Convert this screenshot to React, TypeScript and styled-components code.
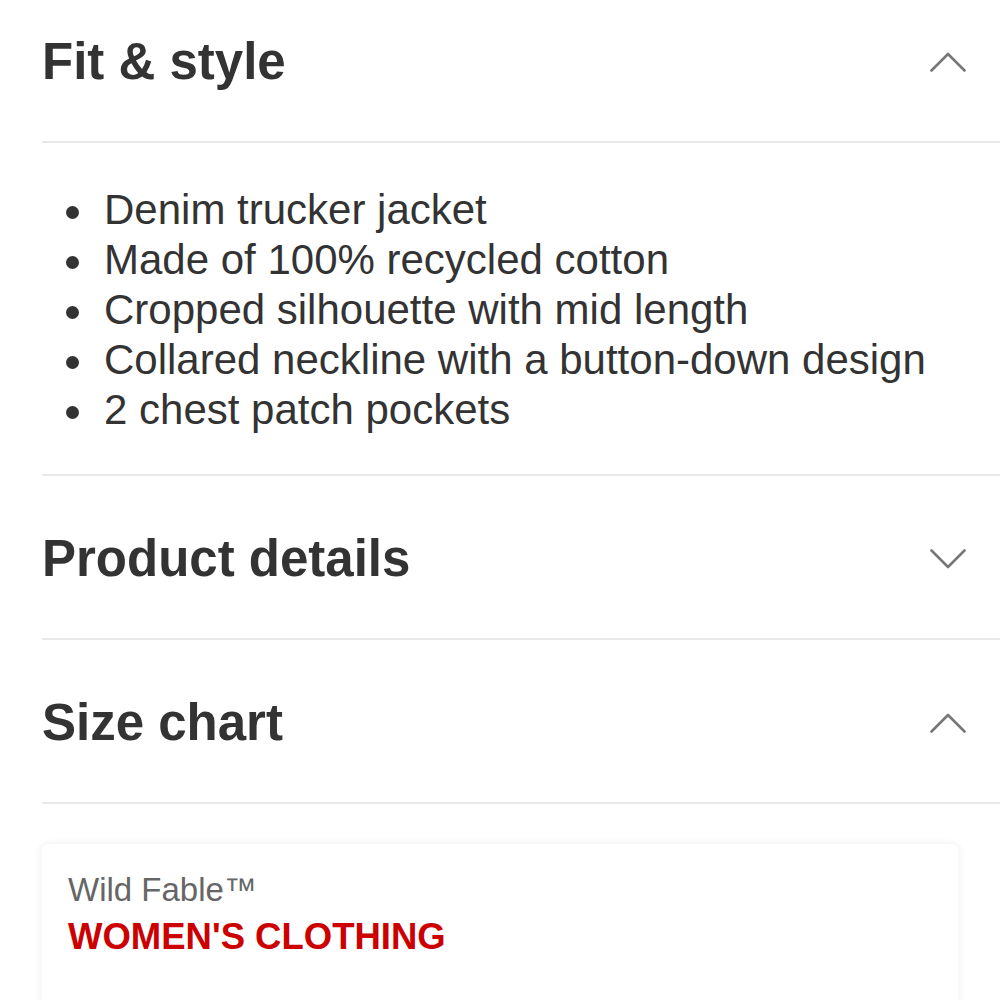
import React, { useState } from 'react'
import styled, { createGlobalStyle } from 'styled-components'

const GlobalStyle = createGlobalStyle`
  html, body {
    margin: 0;
    padding: 0;
    background: #fff;
  }
  body {
    font-family: 'Liberation Sans', Arial, Helvetica, sans-serif;
    color: #333;
    overflow: hidden;
  }
`

const Page = styled.div`
  width: 1000px;
  margin-top: -21px;
`

const Accordion = styled.div`
  margin-left: 42px;
`

const Section = styled.section`
  border-bottom: 2px solid #e8e8e8;
`

const Header = styled.button`
  box-sizing: border-box;
  display: flex;
  align-items: center;
  justify-content: space-between;
  width: 100%;
  height: 162px;
  padding: 4px 34px 0 0;
  margin: 0;
  border: none;
  background: transparent;
  cursor: pointer;
  font-family: inherit;
  text-align: left;
`

const Title = styled.h2`
  margin: 0;
  font-size: 51px;
  line-height: 60px;
  font-weight: 700;
  color: #333;
`

const Chevron = styled.svg<{ $open: boolean }>`
  width: 36px;
  height: 20px;
  transform: ${({ $open }) => ($open ? 'none' : 'rotate(180deg)')};
`

const Body = styled.div`
  padding: 42px 0 39px 0;
`

const List = styled.ul`
  list-style: none;
  margin: 0;
  padding: 0 0 0 24px;
`

const Item = styled.li`
  font-size: 42px;
  line-height: 50px;
  color: #333;
  white-space: nowrap;
`

const Dot = styled.span`
  display: inline-block;
  width: 13px;
  height: 13px;
  border-radius: 50%;
  background: #333;
  vertical-align: middle;
  margin-right: 25px;
`

const Card = styled.div`
  margin: 40px 42px 0 42px;
  padding: 26px 26px 40px 26px;
  background: #fff;
  border-radius: 6px;
  box-shadow: 0 0 10px rgba(0, 0, 0, 0.07);
  min-height: 200px;
`

const Brand = styled.div`
  font-size: 33px;
  line-height: 40px;
  color: #666;
`

const Category = styled.div`
  margin-top: 5px;
  font-size: 36.5px;
  line-height: 44px;
  font-weight: 700;
  color: #cc0000;
`

function ChevronIcon({ open }: { open: boolean }) {
  return (
    <Chevron $open={open} viewBox="0 0 36 20" fill="none">
      <path d="M1.5 18.5 L18 2 L34.5 18.5" stroke="#777" strokeWidth="2.6" strokeLinecap="round" strokeLinejoin="round" />
    </Chevron>
  )
}

const fitItems = [
  'Denim trucker jacket',
  'Made of 100% recycled cotton',
  'Cropped silhouette with mid length',
  'Collared neckline with a button-down design',
  '2 chest patch pockets',
]

export default function App() {
  const [open, setOpen] = useState<Record<string, boolean>>({
    fit: true,
    details: false,
    size: true,
  })
  const toggle = (key: string) => setOpen((o) => ({ ...o, [key]: !o[key] }))

  return (
    <Page>
      <GlobalStyle />
      <Accordion>
        <Section>
          <Header onClick={() => toggle('fit')}>
            <Title>Fit &amp; style</Title>
            <ChevronIcon open={open.fit} />
          </Header>
        </Section>
        {open.fit && (
          <Section>
            <Body>
              <List>
                {fitItems.map((item) => (
                  <Item key={item}>
                    <Dot />
                    {item}
                  </Item>
                ))}
              </List>
            </Body>
          </Section>
        )}
        <Section>
          <Header onClick={() => toggle('details')}>
            <Title>Product details</Title>
            <ChevronIcon open={open.details} />
          </Header>
        </Section>
        <Section>
          <Header onClick={() => toggle('size')}>
            <Title>Size chart</Title>
            <ChevronIcon open={open.size} />
          </Header>
        </Section>
      </Accordion>
      {open.size && (
        <Card>
          <Brand>Wild Fable™</Brand>
          <Category>WOMEN'S CLOTHING</Category>
        </Card>
      )}
    </Page>
  )
}
